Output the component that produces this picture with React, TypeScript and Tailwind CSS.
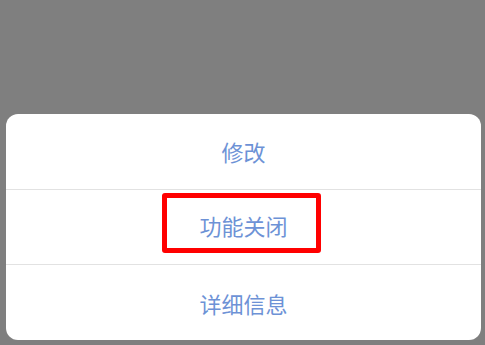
// Action sheet over a dimmed page: three options, the middle one marked.
const ITEMS = ["修改", "功能关闭", "详细信息"];

export default function App() {
  return (
    <div
      className="flex h-[345px] w-[485px] flex-col justify-end bg-[#7f7f7f] pb-[5px] pl-[6px] pr-[4px]"
      style={{ fontFamily: '"Noto Sans CJK SC", "Noto Sans", sans-serif' }}
    >
      <div className="overflow-hidden rounded-[12px] bg-white">
        {ITEMS.map((label, i) => (
          <div
            key={label}
            className={`relative flex h-[75px] items-center justify-center text-[22px] text-[#6d92d6] ${
              i > 0 ? "border-t border-[#e2e2e2]" : ""
            } ${i === 1 ? "pb-[3px]" : ""} ${i === 2 ? "h-[76px] pt-[2px]" : ""}`}
          >
            {label}
            {i === 1 && (
              <span className="absolute left-[156px] top-[3px] h-[60px] w-[159px] rounded-[3px] border-[5px] border-[#ff0000]" />
            )}
          </div>
        ))}
      </div>
    </div>
  );
}
